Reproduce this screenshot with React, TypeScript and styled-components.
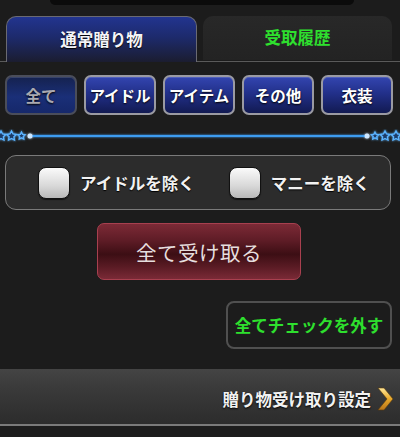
import styled, { createGlobalStyle } from "styled-components";

const GlobalStyle = createGlobalStyle`
  html, body {
    margin: 0;
    padding: 0;
    background: #1c1c1c;
  }
  body {
    font-family: "Noto Sans CJK JP", "Noto Sans", sans-serif;
  }
`;

const Components = {
  Page: styled.div`
    width: 400px;
    height: 437px;
    background: #1c1c1c;
    overflow: hidden;
    display: flex;
    flex-direction: column;
  `,
  TopCap: styled.div`
    margin-left: 50px;
    width: 304px;
    height: 5px;
    background: #0b0b0b;
    border-radius: 0 0 16px 16px;
  `,
  TabBar: styled.div`
    margin-top: 10px;
    height: 46px;
    padding: 0 8px 0 6px;
    display: flex;
    gap: 6px;
    align-items: flex-end;
    border-bottom: 1px solid #5a5a5a;
  `,
  Tab: styled.div<{ $active?: boolean }>`
    flex: 1;
    height: ${(p) => (p.$active ? "46px" : "44px")};
    margin-bottom: ${(p) => (p.$active ? "-1px" : "1px")};
    box-sizing: border-box;
    display: flex;
    align-items: center;
    justify-content: center;
    border-radius: 10px 10px 0 0;
    border: ${(p) => (p.$active ? "1px solid #6a6a72" : "none")};
    border-bottom: none;
    background: ${(p) =>
      p.$active
        ? "linear-gradient(#22348f 0%, #1d2a6c 45%, #1b1d30 100%)"
        : "linear-gradient(#282828, #232323)"};
    color: ${(p) => (p.$active ? "#f4f4f8" : "#2ee02e")};
    font-size: 16.5px;
    font-weight: bold;
    padding-bottom: 2px;
    text-shadow: ${(p) => (p.$active ? "0 1px 1px #000" : "none")};
  `,
  FilterRow: styled.div`
    display: flex;
    gap: 7px;
    padding: 13px 7px 0 5px;
  `,
  FilterButton: styled.div<{ $active?: boolean }>`
    flex: 1;
    height: 40px;
    box-sizing: border-box;
    display: flex;
    align-items: center;
    justify-content: center;
    border-radius: 7px;
    border: 2px solid ${(p) => (p.$active ? "#4a4d5a" : "#9a9aa2")};
    background: ${(p) =>
      p.$active
        ? "linear-gradient(#15224f, #1a2f78 55%, #16286a)"
        : "linear-gradient(#3345b0 0%, #22308a 45%, #121a52 100%)"};
    color: ${(p) => (p.$active ? "#a9a9b0" : "#ffffff")};
    font-size: 15.5px;
    font-weight: bold;
    text-shadow: 0 1px 2px #000;
    box-shadow: inset 0 1px 0 rgba(255, 255, 255, 0.15);
  `,
  Divider: styled.svg`
    display: block;
    margin-top: 14px;
    width: 400px;
    height: 14px;
  `,
  CheckPanel: styled.div`
    margin: 12px 9px 0 5px;
    height: 55px;
    box-sizing: border-box;
    border: 1.5px solid #7a7a7a;
    border-radius: 11px;
    background: #2c2c2c;
    display: flex;
    align-items: center;
    padding-left: 32px;
    gap: 34px;
  `,
  CheckItem: styled.label`
    display: flex;
    align-items: center;
    gap: 10px;
    color: #f2f2f2;
    font-size: 16.5px;
    font-weight: bold;
    text-shadow: 0 1px 1px #000;
  `,
  CheckBox: styled.span`
    width: 32px;
    height: 32px;
    box-sizing: border-box;
    border-radius: 8px;
    border: 1px solid #111;
    background: linear-gradient(#fafafa, #d8d8d8 60%, #b8b8b8);
    box-shadow: 0 1px 1px rgba(0, 0, 0, 0.6);
  `,
  ReceiveRow: styled.div`
    display: flex;
    justify-content: center;
    margin-top: 13px;
    padding-right: 2px;
  `,
  ReceiveButton: styled.div`
    width: 204px;
    height: 57px;
    box-sizing: border-box;
    border-radius: 7px;
    border: 1px solid #a8404f;
    background: linear-gradient(
      #7c2a36 0%,
      #5e1c26 30%,
      #3c0e14 55%,
      #5a1b24 78%,
      #7a2a36 100%
    );
    display: flex;
    align-items: center;
    justify-content: center;
    color: #e6dede;
    font-size: 20.5px;
    letter-spacing: 0.5px;
  `,
  UncheckRow: styled.div`
    display: flex;
    justify-content: flex-end;
    margin-top: 21px;
    padding-right: 8px;
  `,
  UncheckButton: styled.div`
    width: 166px;
    height: 48px;
    box-sizing: border-box;
    border: 2px solid #505050;
    border-radius: 8px;
    display: flex;
    align-items: center;
    justify-content: center;
    color: #2ee02e;
    font-size: 16.5px;
    font-weight: bold;
  `,
  SettingsBar: styled.div`
    margin-top: 20px;
    height: 57px;
    box-sizing: border-box;
    border-bottom: 2px solid #7a7a7a;
    background: linear-gradient(#444444 0%, #3a3a3a 35%, #2c2c2c 100%);
    display: flex;
    align-items: center;
    justify-content: flex-end;
    gap: 6px;
    padding: 4px 6px 0 0;
  `,
  SettingsText: styled.span`
    color: #f2f2f2;
    font-size: 16.5px;
    font-weight: bold;
    text-shadow: 0 1px 2px #000;
  `,
};

const Star = ({ x, y, r }: { x: number; y: number; r: number }) => {
  const pts: string[] = [];
  for (let i = 0; i < 10; i++) {
    const a = -Math.PI / 2 + (i * Math.PI) / 5;
    const rr = i % 2 === 0 ? r : r * 0.5;
    pts.push(`${(x + rr * Math.cos(a)).toFixed(2)},${(y + rr * Math.sin(a)).toFixed(2)}`);
  }
  return <polygon points={pts.join(" ")} fill="#1c3a66" stroke="#5cb4ff" strokeWidth={1.4} />;
};

const filters = ["全て", "アイドル", "アイテム", "その他", "衣装"];

export default function App() {
  return (
    <>
      <GlobalStyle />
      <Components.Page>
        <Components.TopCap />
        <Components.TabBar>
          <Components.Tab $active>通常贈り物</Components.Tab>
          <Components.Tab>受取履歴</Components.Tab>
        </Components.TabBar>

        <Components.FilterRow>
          {filters.map((f, i) => (
            <Components.FilterButton key={f} $active={i === 0}>
              {f}
            </Components.FilterButton>
          ))}
        </Components.FilterRow>

        <Components.Divider viewBox="0 0 400 14">
          <defs>
            <filter id="glow" x="-10%" y="-100%" width="120%" height="300%">
              <feGaussianBlur stdDeviation="1.2" result="b" />
              <feMerge>
                <feMergeNode in="b" />
                <feMergeNode in="SourceGraphic" />
              </feMerge>
            </filter>
          </defs>
          <g filter="url(#glow)">
            <line x1="30" y1="7" x2="367" y2="7" stroke="#3d9cf0" strokeWidth="2" />
            <circle cx="30" cy="7" r="2.5" fill="#cfe8ff" />
            <circle cx="367" cy="7" r="2.5" fill="#cfe8ff" />
            <Star x={1} y={7} r={5} />
            <Star x={11.5} y={7} r={5} />
            <Star x={21.5} y={7} r={3.8} />
            <Star x={375} y={7} r={3.8} />
            <Star x={385} y={7} r={5} />
            <Star x={396} y={7} r={5} />
          </g>
        </Components.Divider>

        <Components.CheckPanel>
          <Components.CheckItem>
            <Components.CheckBox />
            アイドルを除く
          </Components.CheckItem>
          <Components.CheckItem>
            <Components.CheckBox />
            マニーを除く
          </Components.CheckItem>
        </Components.CheckPanel>

        <Components.ReceiveRow>
          <Components.ReceiveButton>全て受け取る</Components.ReceiveButton>
        </Components.ReceiveRow>

        <Components.UncheckRow>
          <Components.UncheckButton>全てチェックを外す</Components.UncheckButton>
        </Components.UncheckRow>

        <Components.SettingsBar>
          <Components.SettingsText>贈り物受け取り設定</Components.SettingsText>
          <svg width="17" height="24" viewBox="0 0 17 24">
            <defs>
              <linearGradient id="gold" x1="0" y1="0" x2="0" y2="1">
                <stop offset="0" stopColor="#ffe89a" />
                <stop offset="0.5" stopColor="#e8a82a" />
                <stop offset="1" stopColor="#b8741a" />
              </linearGradient>
            </defs>
            <polygon points="1,1 7,1 16,12 7,23 1,23 10,12" fill="url(#gold)" stroke="#5a3a0a" strokeWidth="0.6" />
          </svg>
        </Components.SettingsBar>
      </Components.Page>
    </>
  );
}
